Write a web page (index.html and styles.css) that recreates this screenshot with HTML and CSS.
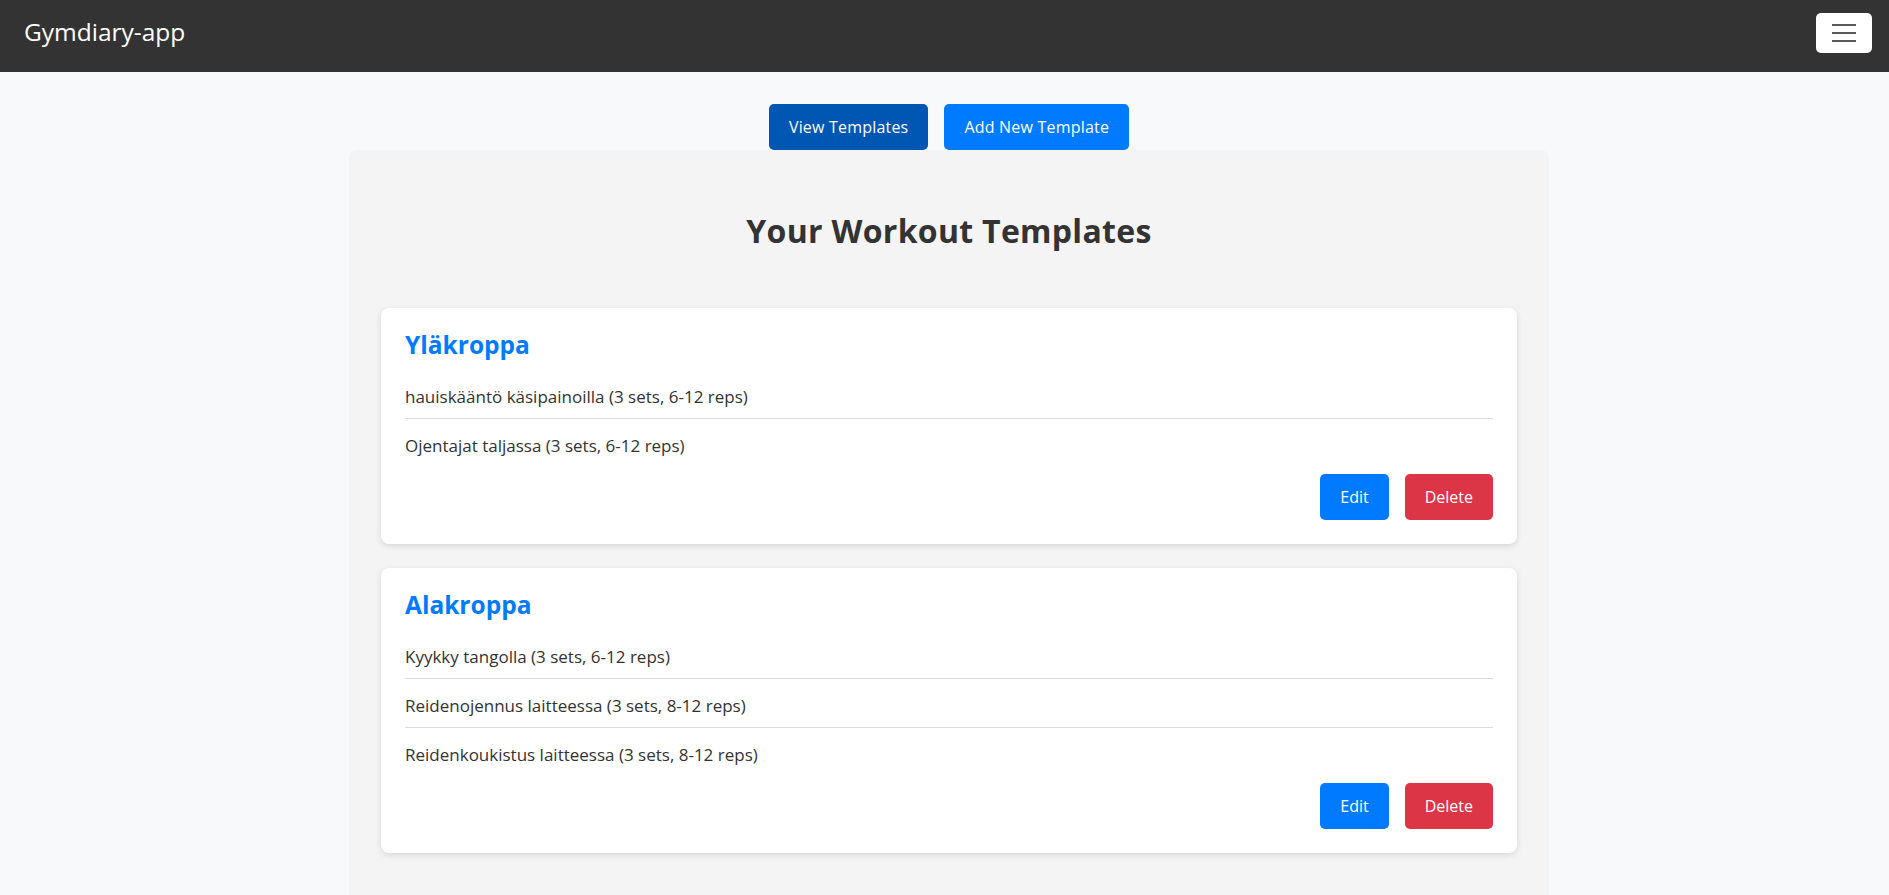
FILE: index.html
```html
<!DOCTYPE html>
<html lang="fi">
<head>
<meta charset="utf-8">
<title>Gymdiary-app</title>
<link rel="stylesheet" href="styles.css">
</head>
<body>
<nav class="navbar">
  <span class="brand">Gymdiary-app</span>
  <button class="toggler" aria-label="Toggle navigation">
    <span class="bar"></span><span class="bar"></span><span class="bar"></span>
  </button>
</nav>
<main class="main">
  <div class="actions">
    <button class="btn btn-dark-blue">View Templates</button>
    <button class="btn btn-blue">Add New Template</button>
  </div>
  <section class="panel">
    <h2 class="panel-title">Your Workout Templates</h2>
    <div class="cards">
      <article class="card">
        <h3 class="card-title">Yläkroppa</h3>
        <ul class="exercises">
          <li class="exercise">hauiskääntö käsipainoilla (3 sets, 6-12 reps)</li>
          <li class="exercise">Ojentajat taljassa (3 sets, 6-12 reps)</li>
        </ul>
        <div class="card-actions">
          <button class="btn btn-blue btn-sm">Edit</button>
          <button class="btn btn-red btn-sm">Delete</button>
        </div>
      </article>
      <article class="card">
        <h3 class="card-title">Alakroppa</h3>
        <ul class="exercises">
          <li class="exercise">Kyykky tangolla (3 sets, 6-12 reps)</li>
          <li class="exercise">Reidenojennus laitteessa (3 sets, 8-12 reps)</li>
          <li class="exercise">Reidenkoukistus laitteessa (3 sets, 8-12 reps)</li>
        </ul>
        <div class="card-actions">
          <button class="btn btn-blue btn-sm">Edit</button>
          <button class="btn btn-red btn-sm">Delete</button>
        </div>
      </article>
    </div>
  </section>
</main>
</body>
</html>
```

FILE: styles.css
```css
* { box-sizing: border-box; }

html, body {
  margin: 0;
  padding: 0;
}

body {
  font-family: "Open Sans", "Noto Sans", sans-serif;
  background: #f8f9fa;
  color: #333;
  overflow: hidden;
}

.navbar {
  height: 72px;
  background: #333333;
  display: flex;
  align-items: center;
  justify-content: space-between;
  padding: 0 17px 0 24px;
}

.brand {
  color: #fff;
  font-size: 24.5px;
  line-height: 1.2;
  margin-bottom: 9px;
}

.toggler {
  width: 56px;
  height: 40px;
  background: #fff;
  border: none;
  border-radius: 5px;
  padding: 0;
  display: flex;
  flex-direction: column;
  align-items: center;
  justify-content: center;
  gap: 6px;
  margin-bottom: 6px;
}

.bar {
  display: block;
  width: 24px;
  height: 2px;
  background: #5a5a5a;
}

.main {
  padding-left: 9px;
}

.actions {
  display: flex;
  justify-content: center;
  gap: 16px;
  padding-top: 32px;
}

.btn {
  font-family: "Open Sans", "Noto Sans", sans-serif;
  font-size: 16px;
  line-height: 22px;
  padding: 12px 20px;
  border: none;
  border-radius: 5px;
  color: #fff;
  letter-spacing: 0.2px;
  cursor: pointer;
}

.btn-sm {
  letter-spacing: 0;
}

.btn-dark-blue { background: #0056b3; }
.btn-blue { background: #007bff; }
.btn-red { background: #dc3545; }

.panel {
  width: 1200px;
  margin: 0 auto;
  background: #f4f4f4;
  border-radius: 8px;
  padding: 32px 32px 80px;
}

.panel-title {
  margin: 30px 0 58px;
  font-size: 32px;
  line-height: 1.2;
  font-weight: 700;
  text-align: center;
  color: #333;
  letter-spacing: 0.3px;
}

.cards {
  display: flex;
  flex-direction: column;
  gap: 24px;
}

.card {
  background: #fff;
  border-radius: 8px;
  box-shadow: 0 2px 6px rgba(0, 0, 0, 0.12);
  padding: 24px;
}

.card-title {
  margin: 0 0 13px;
  font-size: 24.5px;
  line-height: 25px;
  font-weight: 700;
  color: #007bff;
}

.exercises {
  list-style: none;
  margin: 0;
  padding: 0;
}

.exercise {
  font-size: 17px;
  line-height: 28px;
  padding: 13px 0 7px;
  border-bottom: 1px solid #ddd;
  color: #333;
}

.exercise:last-child {
  border-bottom: none;
}

.card-actions {
  display: flex;
  justify-content: flex-end;
  gap: 16px;
  margin-top: 7px;
}
```
